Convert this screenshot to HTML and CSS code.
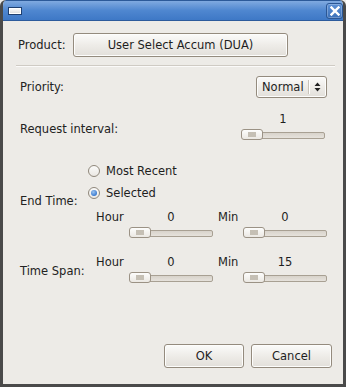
FILE: index.html
```html
<!DOCTYPE html>
<html>
<head>
<meta charset="utf-8">
<link rel="stylesheet" href="styles.css">
</head>
<body>
<div class="win">
  <div class="titlebar">
    <span class="winicon"></span>
    <span class="closebtn">
      <svg width="10" height="10" viewBox="0 0 10 10"><path d="M1.5 1.5 L8.5 8.5 M8.5 1.5 L1.5 8.5" stroke="#fff" stroke-width="2.4" stroke-linecap="square"/></svg>
    </span>
  </div>
  <div class="content">
    <div class="row product">
      <span class="lbl">Product:</span>
      <button class="btn prodbtn">User Select Accum (DUA)</button>
    </div>
    <div class="sep"></div>
    <div class="row priority">
      <span class="lbl">Priority:</span>
      <div class="combo"><span class="ctext">Normal</span><span class="cdiv"></span>
        <svg class="carrows" width="7" height="10" viewBox="0 0 7 10"><path d="M3.5 0.5 L6.5 4 L0.5 4 Z M3.5 9.5 L6.5 6 L0.5 6 Z" fill="#222"/></svg>
      </div>
    </div>
    <div class="row interval">
      <span class="lbl">Request interval:</span>
      <div class="scol">
        <span class="val">1</span>
        <div class="slider"><span class="thumb"></span></div>
      </div>
    </div>
    <div class="row endtime">
      <span class="lbl wide">End Time:</span>
      <div class="block">
        <div class="radio"><span class="rb"></span>Most Recent</div>
        <div class="radio"><span class="rb on"></span>Selected</div>
        <div class="tgrid indent">
          <span class="tl">Hour</span>
          <div class="scol sm"><span class="val">0</span><div class="slider"><span class="thumb"></span></div></div>
          <span class="tl min">Min</span>
          <div class="scol sm"><span class="val">0</span><div class="slider"><span class="thumb"></span></div></div>
        </div>
      </div>
    </div>
    <div class="row timespan">
      <span class="lbl wide">Time Span:</span>
      <div class="tgrid indent">
        <span class="tl">Hour</span>
        <div class="scol sm"><span class="val">0</span><div class="slider"><span class="thumb"></span></div></div>
        <span class="tl min">Min</span>
        <div class="scol sm"><span class="val">15</span><div class="slider"><span class="thumb"></span></div></div>
      </div>
    </div>
    <div class="actions">
      <button class="btn act ok">OK</button>
      <button class="btn act cancel">Cancel</button>
    </div>
  </div>
</div>
</body>
</html>
```

FILE: styles.css
```css
* { box-sizing: border-box; }
html, body { margin: 0; padding: 0; background: #edebe7; }
body { font-family: "DejaVu Sans", sans-serif; font-size: 11.5px; color: #1e1e1e; }
.win {
  width: 346px; height: 387px;
  background: #edebe7;
  border: 3px solid #4a4a4a;
  border-top: none;
  border-radius: 6px 6px 0 0;
  display: flex; flex-direction: column;
  overflow: hidden;
}
.titlebar {
  height: 21px;
  margin: 0 -3px;
  background: linear-gradient(#80aae0, #4f87d0 50%, #3e78c6);
  border: 1px solid #2c5a99;
  border-bottom-color: #2d5b9c;
  border-radius: 6px 6px 0 0;
  display: flex; align-items: center; justify-content: space-between;
  padding: 0 2px 0 7px;
}
.winicon {
  width: 14px; height: 8px;
  background: linear-gradient(#ffffff, #d8d8d8);
  border: 1px solid #1e3f70;
  box-shadow: inset 0 0 0 1px #fff;
}
.closebtn {
  width: 17px; height: 16px;
  border: 1px solid #2b5795;
  border-radius: 3px;
  background: linear-gradient(#5d91d6, #3b70b8);
  box-shadow: inset 0 0 0 1px rgba(255,255,255,0.25);
  display: flex; align-items: center; justify-content: center;
}
.content {
  flex: 1;
  display: flex; flex-direction: column;
  padding: 12px 11px 16px 15px;
}
.row { display: flex; align-items: center; }
.lbl { color: #222; }
.product { height: 24px; }
.product .lbl { width: 55px; }
.btn {
  font-family: inherit; font-size: 11.5px; color: #1e1e1e;
  background: linear-gradient(#fbfbfa, #eeece8 50%, #e2dfda);
  border: 1px solid #948b7e;
  border-radius: 3px;
  box-shadow: inset 0 0 0 1px #fdfdfc;
  padding: 0;
}
.prodbtn { width: 215px; height: 24px; }
.sep {
  height: 2px; margin: 8px 0 0 -2px; width: 319px;
  border-top: 1px solid #cfcbc4;
  border-bottom: 1px solid #fbfaf9;
}
.priority { margin-top: 9px; justify-content: space-between; padding-left: 2px; padding-right: 5px; }
.combo {
  width: 71px; height: 22px;
  display: flex; align-items: center;
  background: linear-gradient(#fbfbfa, #eeece8 50%, #e2dfda);
  border: 1px solid #948b7e;
  border-radius: 3px;
  box-shadow: inset 0 0 0 1px #fdfdfc;
  padding-left: 5px;
}
.ctext { width: 46px; }
.cdiv { width: 1px; height: 14px; background: #c9c3ba; margin-right: 5px; box-shadow: 1px 0 0 #fff; }
.interval { margin-top: 15px; padding-left: 2px; }
.interval .lbl { width: 221px; padding-top: 4px; }
.scol { display: flex; flex-direction: column; align-items: center; width: 84px; }
.val { height: 13px; line-height: 13px; }
.slider {
  position: relative;
  width: 84px; height: 11px; margin-top: 3px;
}
.slider::before {
  content: ""; position: absolute; left: 1px; right: 0; top: 3px; height: 5px;
  background: linear-gradient(#d8d3cb, #e6e2dc);
  border: 1px solid #a8a093;
  border-radius: 2px;
}
.thumb {
  position: absolute; left: 0; top: 0;
  width: 22px; height: 11px;
  border: 1px solid #9b9285;
  border-radius: 3px;
  background: linear-gradient(#fdfdfc, #ebe8e3);
}
.thumb::after {
  content: ""; position: absolute; left: 6px; top: 2px; width: 8px; height: 5px;
  background-image: radial-gradient(circle, #c4beb3 0.7px, transparent 1px);
  background-size: 2px 2px;
}
.endtime { margin-top: 23px; padding-left: 2px; }
.wide { width: 68px; }
.endtime .lbl { padding-top: 0; }
.block { display: flex; flex-direction: column; }
.radio { display: flex; align-items: center; height: 15px; margin-bottom: 7px; }
.rb {
  width: 12px; height: 12px; border-radius: 50%;
  border: 1px solid #8f877b;
  background: linear-gradient(#fbfbfa, #ebe8e3);
  margin-right: 6px;
  position: relative;
}
.rb.on::after {
  content: ""; position: absolute; left: 2px; top: 2px; width: 6px; height: 6px; border-radius: 50%;
  background: radial-gradient(circle at 40% 35%, #9cc4f0, #3a7ad0 70%);
}
.tgrid { display: flex; align-items: flex-start; }
.indent { margin-left: 8px; }
.block .tgrid { margin-top: 4px; }
.tl { width: 33px; height: 13px; line-height: 13px; }
.tl.min { width: 30px; padding-left: 5px; }
.timespan { margin-top: 18px; padding-left: 2px; }
.timespan .lbl { padding-top: 2px; }
.actions { margin-top: auto; display: flex; justify-content: flex-end; gap: 7px; }
.act { height: 24px; }
.ok { width: 80px; }
.cancel { width: 81px; }
```
